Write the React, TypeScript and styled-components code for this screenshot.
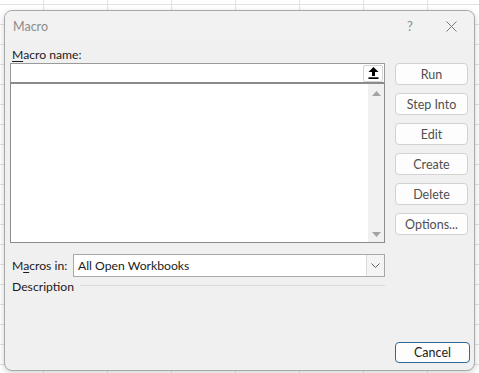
import styled, { createGlobalStyle } from 'styled-components';

const GlobalStyle = createGlobalStyle`
    html, body {
        margin: 0;
        padding: 0;
    }
    body {
        width: 479px;
        height: 373px;
        overflow: hidden;
        font-family: Lato, "Noto Sans", Arial, sans-serif;
    }
`

// the sheet behind the dialog
const Sheet = styled.div`
    box-sizing: border-box;
    width: 479px;
    height: 373px;
    padding: 10px 0 0 4px;
    background-color: #ffffff;
    background-image:
        linear-gradient(to right, #e2e2e2 1px, transparent 1px),
        linear-gradient(to bottom, #e2e2e2 1px, transparent 1px);
    background-size: 64px 20px, 64px 20px;
    background-position: 43px 0, 0 4px;
`

const Dialog = styled.div`
    box-sizing: border-box;
    width: 471px;
    height: 361px;
    display: flex;
    flex-direction: column;
    background: #f0f0f0;
    border: 1px solid #a9a9a9;
    border-radius: 8px;
    box-shadow: 0 2px 6px rgba(0, 0, 0, 0.18);
    color: #1b1b1b;
    font-size: 12.2px;
`

const TitleBar = styled.div`
    height: 30px;
    display: flex;
    align-items: center;
    padding-left: 8px;
    border-radius: 8px 8px 0 0;
    background: #f2f2f2;
`

const Title = styled.span`
    flex: 1;
    color: #8c8c8c;
    font-size: 12.5px;
    padding-top: 1px;
`

const TitleIcon = styled.span<{ $width: number }>`
    width: ${p => p.$width}px;
    height: 30px;
    display: flex;
    align-items: center;
    justify-content: center;
    color: #8a8a8a;
    font-size: 13px;
`

const Body = styled.div`
    flex: 1;
    display: grid;
    grid-template-columns: 375px 73px;
    column-gap: 10px;
    padding: 0 6px 0 5px;
`

const LeftCol = styled.div`
    display: flex;
    flex-direction: column;
`

const Label = styled.div`
    height: 22px;
    line-height: 16px;
    padding: 6px 0 0 2px;
    box-sizing: border-box;
    u { text-decoration-thickness: 1px; text-underline-offset: 2px; }
`

const NameInput = styled.div`
    box-sizing: border-box;
    height: 20px;
    background: #ffffff;
    border: 1px solid #9a9a9a;
    border-bottom-color: #8a8a8a;
    display: flex;
    justify-content: flex-end;
    align-items: center;
    padding-right: 1px;
`

const PickButton = styled.div`
    box-sizing: border-box;
    width: 20px;
    height: 17px;
    display: flex;
    align-items: center;
    justify-content: center;
    background: #ffffff;
    border: 1px solid #d4d4d4;
    border-radius: 2px;
`

const ListBox = styled.div`
    box-sizing: border-box;
    height: 160px;
    background: #ffffff;
    border: 1px solid #8c8c8c;
    display: flex;
    justify-content: flex-end;
`

const ScrollTrack = styled.div`
    width: 16px;
    background: #f1f1f1;
    display: flex;
    flex-direction: column;
    justify-content: space-between;
    align-items: center;
    padding: 7px 0 5px;
`

const FieldRow = styled.div`
    display: flex;
    align-items: center;
    margin-top: 11px;
    height: 23px;
`

const RowLabel = styled.span`
    width: 63px;
    padding: 0 0 1px 2px;
    box-sizing: border-box;
    u { text-decoration-thickness: 1px; text-underline-offset: 2px; }
`

const Select = styled.div`
    box-sizing: border-box;
    flex: 1;
    height: 23px;
    display: flex;
    align-items: center;
    background: #ffffff;
    border: 1px solid #a8a8a8;
    padding-left: 4px;
`

const SelectValue = styled.span`
    flex: 1;
`

const DropArrow = styled.span`
    width: 17px;
    height: 21px;
    display: flex;
    align-items: center;
    justify-content: center;
    background: #f4f4f4;
    border-left: 1px solid #dcdcdc;
`

const DescRow = styled.div`
    display: flex;
    align-items: center;
    height: 18px;
    padding-left: 2px;
`

const Rule = styled.div`
    flex: 1;
    height: 1px;
    background: #dadada;
    margin: 0 0 1px 6px;
`

const ButtonCol = styled.div`
    display: flex;
    flex-direction: column;
    gap: 8px;
    padding-top: 22px;
`

const Button = styled.div<{ $primary?: boolean }>`
    box-sizing: border-box;
    height: ${p => (p.$primary ? 21 : 22)}px;
    width: ${p => (p.$primary ? 75 : 73)}px;
    display: flex;
    align-items: center;
    justify-content: center;
    background: #fdfdfd;
    border: 1px solid ${p => (p.$primary ? '#2f6a96' : '#d2d2d2')};
    border-radius: 4px;
    color: ${p => (p.$primary ? '#1b1b1b' : '#505050')};
    font-size: 12.5px;
`

const Footer = styled.div`
    display: flex;
    justify-content: flex-end;
    padding: 0 4px 7px 0;
`

const buttons = ['Run', 'Step Into', 'Edit', 'Create', 'Delete', 'Options...'];

const App = () => {
    return (
        <>
            <GlobalStyle />
            <Sheet>
                <Dialog>
                    <TitleBar>
                        <Title>Macro</Title>
                        <TitleIcon $width={36}>?</TitleIcon>
                        <TitleIcon $width={46}>
                            <svg width="11" height="11" viewBox="0 0 11 11">
                                <path d="M0.5 0.5 L10.5 10.5 M10.5 0.5 L0.5 10.5" stroke="#7a7a7a" strokeWidth="1" />
                            </svg>
                        </TitleIcon>
                    </TitleBar>
                    <Body>
                        <LeftCol>
                            <Label><u>M</u>acro name:</Label>
                            <NameInput>
                                <PickButton>
                                    <svg width="11" height="12" viewBox="0 0 11 12">
                                        <path d="M5.5 0 L10.5 5 H7 V9 H4 V5 H0.5 Z" fill="#000" />
                                        <rect x="0.5" y="10.3" width="10" height="1.7" fill="#000" />
                                    </svg>
                                </PickButton>
                            </NameInput>
                            <ListBox>
                                <ScrollTrack>
                                    <svg width="9" height="5" viewBox="0 0 9 5">
                                        <path d="M4.5 0 L9 5 H0 Z" fill="#a3a3a3" />
                                    </svg>
                                    <svg width="9" height="5" viewBox="0 0 9 5">
                                        <path d="M0 0 H9 L4.5 5 Z" fill="#a3a3a3" />
                                    </svg>
                                </ScrollTrack>
                            </ListBox>
                            <FieldRow>
                                <RowLabel>M<u>a</u>cros in:</RowLabel>
                                <Select>
                                    <SelectValue>All Open Workbooks</SelectValue>
                                    <DropArrow>
                                        <svg width="9" height="5" viewBox="0 0 9 5">
                                            <path d="M0.5 0.5 L4.5 4.5 L8.5 0.5" stroke="#606060" fill="none" strokeWidth="1" />
                                        </svg>
                                    </DropArrow>
                                </Select>
                            </FieldRow>
                            <DescRow>
                                Description
                                <Rule />
                            </DescRow>
                        </LeftCol>
                        <ButtonCol>
                            {buttons.map(b => (
                                <Button key={b}>{b}</Button>
                            ))}
                        </ButtonCol>
                    </Body>
                    <Footer>
                        <Button $primary>Cancel</Button>
                    </Footer>
                </Dialog>
            </Sheet>
        </>
    )
}

export default App
